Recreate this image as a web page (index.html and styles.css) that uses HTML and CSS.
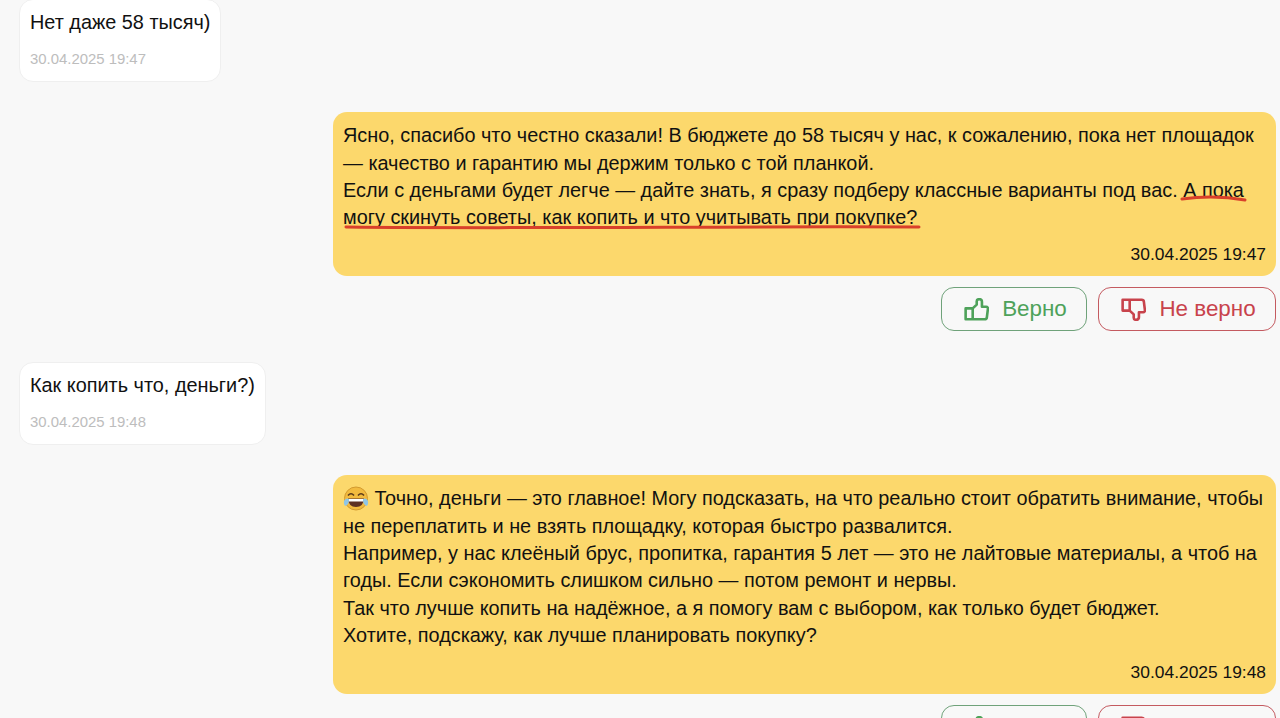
FILE: index.html
```html
<!DOCTYPE html>
<html lang="ru">
<head>
    <meta charset="UTF-8">
    <meta name="viewport" content="width=device-width, initial-scale=1.0">
    <title>Диалог</title>
    <link rel="stylesheet" href="styles.css">
</head>
<body>
    <div class="chat">
        <div class="message incoming">
            <p class="message-text">Нет даже 58 тысяч)</p>
            <div class="message-time">30.04.2025 19:47</div>
        </div>

        <div class="outgoing-group">
            <div class="message outgoing">
                <p class="message-text">Ясно, спасибо что честно сказали! В бюджете до 58 тысяч у нас, к сожалению, пока нет площадок<br>— качество и гарантию мы держим только с той планкой.<br>Если с деньгами будет легче — дайте знать, я сразу подберу классные варианты под вас. А пока<br>могу скинуть советы, как копить и что учитывать при покупке?</p>
                <div class="message-time">30.04.2025 19:47</div>
                <!-- red marker strokes drawn over the text -->
                <svg class="marker" viewBox="0 0 943 164" aria-hidden="true">
                    <path d="M849 87 C870 84 890 84 912 88"/>
                    <path d="M13 115 C200 117 400 114 586 115"/>
                </svg>
            </div>
            <div class="feedback">
                <button class="feedback-btn right">
                    <svg class="feedback-icon" viewBox="0 0 23 21"><path d="M8 9.5H1.5V19.5H8M8 9.5V19.5H19C20 19.5 20.9 19 21 18L22 10C22.2 9 21.5 8 20.5 8H16.5V3.5C16.5 2 15.5 1 14 1C12.5 1 11.7 1.8 11.7 3V6Z"/></svg>
                    Верно
                </button>
                <button class="feedback-btn wrong">
                    <svg class="feedback-icon" viewBox="0 0 23 21"><path d="M8 11.5H1.5V1.5H8M8 11.5V1.5H19C20 1.5 20.9 2 21 3L22 11C22.2 12 21.5 13 20.5 13H16.5V17.5C16.5 19 15.5 20 14 20C12.5 20 11.7 19.2 11.7 18V15Z"/></svg>
                    Не верно
                </button>
            </div>
        </div>

        <div class="message incoming">
            <p class="message-text">Как копить что, деньги?)</p>
            <div class="message-time">30.04.2025 19:48</div>
        </div>

        <div class="outgoing-group">
            <div class="message outgoing">
                <p class="message-text"><svg class="emoji" viewBox="0 0 26 26" aria-hidden="true">
                    <circle cx="13" cy="12.5" r="11.5" fill="#f2bb3f" stroke="#d29a30"/>
                    <path d="M5 9.5 Q8 6 11 9.5M15 9.5 Q18 6 21 9.5" fill="none" stroke="#5a3a1a" stroke-width="1.6"/>
                    <path d="M5 12.5 H21 Q20.5 21 13 21 Q5.5 21 5 12.5Z" fill="#5e3023"/>
                    <path d="M6 13 H20 V15.5 H6Z" fill="#fff"/>
                    <path d="M1 15 Q3 11.5 6 13 Q6.5 18 2.5 20 Q0.5 19 1 15ZM25 15 Q23 11.5 20 13 Q19.5 18 23.5 20 Q25.5 19 25 15Z" fill="#8fc6e6"/>
                </svg> Точно, деньги — это главное! Могу подсказать, на что реально стоит обратить внимание, чтобы<br>не переплатить и не взять площадку, которая быстро развалится.<br>Например, у нас клеёный брус, пропитка, гарантия 5 лет — это не лайтовые материалы, а чтоб на<br>годы. Если сэкономить слишком сильно — потом ремонт и нервы.<br>Так что лучше копить на надёжное, а я помогу вам с выбором, как только будет бюджет.<br>Хотите, подскажу, как лучше планировать покупку?</p>
                <div class="message-time">30.04.2025 19:48</div>
            </div>
            <div class="feedback">
                <button class="feedback-btn right">
                    <svg class="feedback-icon" viewBox="0 0 23 21"><path d="M8 9.5H1.5V19.5H8M8 9.5V19.5H19C20 19.5 20.9 19 21 18L22 10C22.2 9 21.5 8 20.5 8H16.5V3.5C16.5 2 15.5 1 14 1C12.5 1 11.7 1.8 11.7 3V6Z"/></svg>
                    Верно
                </button>
                <button class="feedback-btn wrong">
                    <svg class="feedback-icon" viewBox="0 0 23 21"><path d="M8 11.5H1.5V1.5H8M8 11.5V1.5H19C20 1.5 20.9 2 21 3L22 11C22.2 12 21.5 13 20.5 13H16.5V17.5C16.5 19 15.5 20 14 20C12.5 20 11.7 19.2 11.7 18V15Z"/></svg>
                    Не верно
                </button>
            </div>
        </div>
    </div>
</body>
</html>
```

FILE: styles.css
```css
html, body {
    height: 100%;
}
body {
    margin: 0;
    overflow: hidden;
    background-color: #f8f8f8;
    color: #111;
    font-family: 'Liberation Sans', Arial, sans-serif;
    font-size: 19.88px;
}
.chat {
    display: flex;
    flex-direction: column;
    gap: 30.6px;
    padding: 0 4px 0 19px;
    margin-top: -1px;
}
.message {
    border-radius: 14px;
    padding: 10px;
}
.message-text {
    margin: 0;
    line-height: 27.4px;
}
.incoming {
    align-self: flex-start;
    background-color: #fff;
    border: 1px solid #efefef;
    padding: 9px 10px 10.6px 10px;
}
.incoming .message-time {
    margin-top: 11.6px;
    color: #bdbdbd;
    line-height: 22px;
    font-size: 14.9px;
}
.outgoing-group {
    display: flex;
    flex-direction: column;
    align-items: flex-end;
    gap: 11px;
}
.outgoing {
    position: relative;
    width: 923px;
    background-color: #fcd86c;
}
.outgoing .message-time {
    margin-top: 11px;
    padding-bottom: 1.6px;
    text-align: right;
    line-height: 22px;
    font-size: 17.4px;
}
.marker {
    position: absolute;
    top: 0;
    left: 0;
    width: 943px;
    height: 164px;
    fill: none;
    stroke: #d9402a;
    stroke-width: 3;
    stroke-linecap: round;
}
.emoji {
    width: 26px;
    height: 26px;
    vertical-align: -7px;
}
.feedback {
    display: flex;
    gap: 11px;
}
.feedback-btn {
    display: flex;
    align-items: center;
    justify-content: center;
    gap: 13px;
    height: 44px;
    padding: 0 0 0 3px;
    background-color: #f8f8f8;
    border-radius: 13px;
    font-family: inherit;
    font-size: 22.4px;
}
.feedback-btn.right {
    width: 146px;
    border: 1px solid #6fa27a;
    color: #4ea25a;
}
.feedback-btn.wrong {
    width: 178px;
    border: 1px solid #c45a60;
    color: #c8434c;
}
.feedback-icon {
    width: 25px;
    height: 23px;
    fill: none;
    stroke: currentColor;
    stroke-width: 2.4;
    stroke-linejoin: round;
}
```
